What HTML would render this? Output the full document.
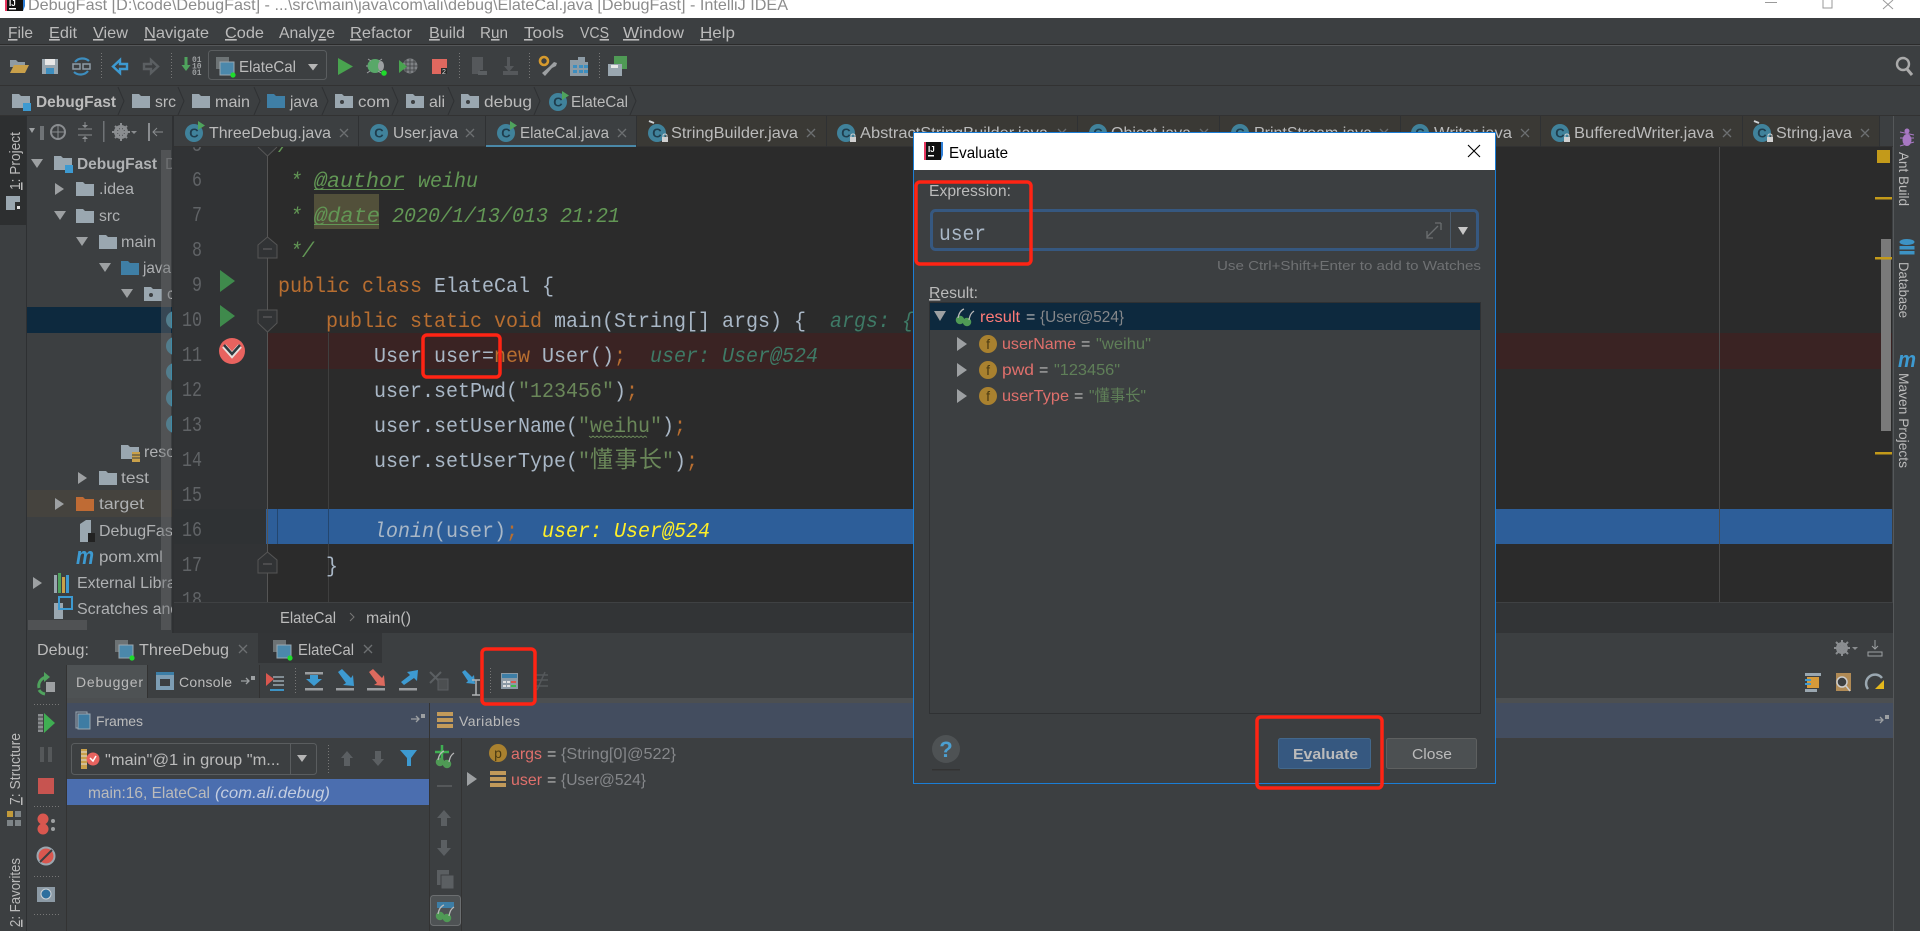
<!DOCTYPE html>
<html><head><meta charset="utf-8"><title>Evaluate</title>
<style>
html,body{margin:0;padding:0;background:#3c3f41;overflow:hidden;width:1920px;height:931px}
svg{display:block}
text{white-space:pre}
.s{font-family:"Liberation Sans","Noto Sans CJK SC",sans-serif;font-size:16px;fill:#bbbbbb}
.c{font-family:"Liberation Mono","Noto Sans CJK SC",monospace;font-size:21px;fill:#a9b7c6}
.n{font-family:"Liberation Mono",monospace;font-size:21px;fill:#606366}
.k{fill:#b86e30}.g{fill:#629755;font-style:italic}.str{fill:#6a8759}
.h{fill:#3e7a66;font-style:italic}
.y{fill:#ffef28;font-style:italic}
.t{fill:#afb1b3}
.r{fill:#e0706c}.v{fill:#85878a}.q{fill:#5f7f58}
.u{text-decoration:underline}
</style></head><body>
<svg width="1920" height="931" viewBox="0 0 1920 931" xmlns="http://www.w3.org/2000/svg">
<defs>
<path id="fld" d="M0 1h7l2 2h9v12H0z"/>
<g id="pkg"><path d="M0 1h7l2 2h9v12H0z" fill="#9aa7b0"/><circle cx="7" cy="9" r="2" fill="#3c3f41"/></g>
<g id="cls"><circle cx="9" cy="10" r="9" fill="#40829b"/><text x="9" y="14.500" text-anchor="middle" font-family="Liberation Sans" font-size="13" font-weight="bold" fill="#1f3d4d">C</text></g>
<path id="runov" d="M0 0l7 4.5-7 4.5z" fill="#4fa35d"/>
<g id="lock"><rect x="0" y="3" width="6" height="5" fill="#d0d0d0"/><path d="M1 3V1.5a2 1.5 0 0 1 4 0V3" fill="none" stroke="#d0d0d0"/></g>
<g id="runicon"><rect x="0" y="0" width="13" height="12" fill="#6d7375"/><rect x="4" y="5" width="14" height="13" fill="#4b88ab" stroke="#9aa7b0"/><circle cx="17" cy="18" r="2.6" fill="#1fdc2c"/></g>
<path id="ar" d="M0-6l9 6-9 6z" fill="#9da0a2"/>
<path id="ad" d="M-6 0h12l-6 9z" fill="#9da0a2"/>
<g id="pin"><path d="M0 5h8M5 2l3 3-3 3" stroke="#9da0a2" fill="none" stroke-width="1.3"/><rect x="10" y="0" width="4" height="4" fill="#9da0a2"/></g>
<g id="fcirc"><circle r="9" fill="#a9812f"/><text y="5" text-anchor="middle" font-family="Liberation Sans" font-size="14" fill="#4a3a12">f</text></g>
<g id="vars"><rect x="0" y="0" width="16" height="4" fill="#c29a5a"/><rect x="0" y="6" width="16" height="4" fill="#c29a5a"/><rect x="0" y="12" width="16" height="4" fill="#c29a5a"/></g>
<g id="glasses" fill="none" stroke="#b9b9b9" stroke-width="1.3"><circle cx="4" cy="13" r="3.6" fill="#4f9a55" stroke="#4f9a55"/><circle cx="11" cy="15" r="3.6" fill="#4f9a55" stroke="#4f9a55"/><path d="M2 11C3 6 5 3 8 2M13 13C14 8 15 6 18 4"/></g>
<clipPath id="cp"><rect x="27" y="147" width="145" height="483"/></clipPath>
<clipPath id="ce"><rect x="172" y="147" width="1720" height="455"/></clipPath>
<clipPath id="ct"><rect x="0" y="0" width="1920" height="18"/></clipPath>
</defs>

<!-- Title -->
<rect width="1920" height="18" fill="#fff"/>
<g clip-path="url(#ct)">
<rect x="7" y="-6" width="16" height="17" fill="#111"/><path d="M5-6h2v17H5z" fill="#e8375f"/><path d="M23-6h2v12l-2 5z" fill="#2e7fd8"/><path d="M9 8h7v1.5H9z" fill="#fff"/><text x="9" y="6" font-family="Liberation Sans" font-weight="bold" font-size="8" fill="#fff">IJ</text>
<text class="s" x="28" y="10" textLength="760" lengthAdjust="spacingAndGlyphs" style="fill:#8c8c8c">DebugFast [D:\code\DebugFast] - ...\src\main\java\com\ali\debug\ElateCal.java [DebugFast] - IntelliJ IDEA</text>
<path d="M1765 2.500h12M1823 0v8h9V0M1883 0l5 4.500 5-4.500M1888 4.500l-5 4.500M1888 4.500l5 4.500" stroke="#9a9a9a" fill="none"/>
</g>

<!-- Menu -->
<rect y="18" width="1920" height="26" fill="#3c3f41"/>
<rect y="44" width="1920" height="1" fill="#2b2b2b"/><rect y="45" width="1920" height="1" fill="#555759"/>
<g>
<text class="s" x="8" y="38" textLength="25" lengthAdjust="spacingAndGlyphs"><tspan class="u">F</tspan>ile</text>
<text class="s" x="49" y="38" textLength="28" lengthAdjust="spacingAndGlyphs"><tspan class="u">E</tspan>dit</text>
<text class="s" x="93" y="38" textLength="35" lengthAdjust="spacingAndGlyphs"><tspan class="u">V</tspan>iew</text>
<text class="s" x="144" y="38" textLength="65" lengthAdjust="spacingAndGlyphs"><tspan class="u">N</tspan>avigate</text>
<text class="s" x="225" y="38" textLength="39" lengthAdjust="spacingAndGlyphs"><tspan class="u">C</tspan>ode</text>
<text class="s" x="279" y="38" textLength="56" lengthAdjust="spacingAndGlyphs">Analy<tspan class="u">z</tspan>e</text>
<text class="s" x="350" y="38" textLength="62" lengthAdjust="spacingAndGlyphs"><tspan class="u">R</tspan>efactor</text>
<text class="s" x="429" y="38" textLength="36" lengthAdjust="spacingAndGlyphs"><tspan class="u">B</tspan>uild</text>
<text class="s" x="480" y="38" textLength="28" lengthAdjust="spacingAndGlyphs">R<tspan class="u">u</tspan>n</text>
<text class="s" x="524" y="38" textLength="40" lengthAdjust="spacingAndGlyphs"><tspan class="u">T</tspan>ools</text>
<text class="s" x="580" y="38" textLength="29" lengthAdjust="spacingAndGlyphs">VC<tspan class="u">S</tspan></text>
<text class="s" x="623" y="38" textLength="61" lengthAdjust="spacingAndGlyphs"><tspan class="u">W</tspan>indow</text>
<text class="s" x="700" y="38" textLength="35" lengthAdjust="spacingAndGlyphs"><tspan class="u">H</tspan>elp</text>
</g>

<!-- Toolbar -->
<rect y="85" width="1920" height="1" fill="#323232"/>
<path d="M10 60h6l2 2h7v5H10z" fill="#8f9ba3"/><path d="M14 65h15l-4 8H10z" fill="#c9a04a"/>
<path d="M42 59h16v15H42z" fill="#9aa7b0"/><rect x="45" y="59" width="10" height="6" fill="#e8e8e8"/><rect x="46" y="68" width="8" height="6" fill="#3d8ebf"/>
<g fill="none" stroke="#3d8ebf" stroke-width="2.200"><path d="M75 62a9 8 0 0 1 14-1M88 71a9 8 0 0 1-14 1"/></g><path d="M73 64h7v5h-7zM83 64h7v5h-7z" fill="none" stroke="#8d9ba5" stroke-width="1.500"/>
<path d="M120 60l-7 6.500 7 6.500v-4h7v-5h-7z" fill="none" stroke="#3d9ad1" stroke-width="2.400"/>
<path d="M151 60l7 6.500-7 6.500v-4h-7v-5h7z" fill="none" stroke="#5b5f62" stroke-width="2.400"/>
<path d="M184.500 57h3v8h3l-4.500 6-4.500-6h3z" fill="#4fa35d"/>
<g font-family="Liberation Mono" font-size="8" font-weight="bold" fill="#9da0a2"><text x="192" y="62">01</text><text x="192" y="68.500">10</text><text x="192" y="75">01</text></g>
<rect x="208.500" y="50.500" width="118" height="29" rx="3" fill="#3c3f41" stroke="#5a5d5f"/>
<use href="#runicon" x="216" y="57"/>
<text class="s" x="239" y="72" textLength="57" lengthAdjust="spacingAndGlyphs">ElateCal</text>
<path d="M308 64h10l-5 6.500z" fill="#b5b5b5"/>
<path d="M338 58l15 8.500-15 8.500z" fill="#49a34f"/>
<ellipse cx="375" cy="66" rx="7.500" ry="7" fill="#59a869"/><ellipse cx="381" cy="66" rx="3" ry="5" fill="#9da0a2"/><path d="M368 59l3 2M382 59l-3 2M366 66h2M367 73l3-2M381 73l-3-2" stroke="#9da0a2"/><circle cx="384" cy="73" r="2.800" fill="#1fdc2c"/>
<circle cx="410" cy="66" r="7.500" fill="#7f8285"/><path d="M403 62h14M402 66h16M403 70h14M406 59v14M410 59v14M414 59v14" stroke="#3c3f41" stroke-width=".8"/><path d="M399 60l8 6.500-8 6.500z" fill="#49a34f"/>
<path d="M432 59h15v11h-4v4h-11z" fill="#e0685f"/><rect x="441" y="68" width="6" height="6" fill="#2b2b2b"/><text x="442" y="74" font-family="Liberation Sans" font-size="7" fill="#ddd">2</text>
<path d="M472 57h11v13h-3v4h-8z" fill="#55585b"/><path d="M478 71h9v4h-9z" fill="#5b5f62"/>
<path d="M507 57h3v9h4l-5 6-5-6h3zM503 71h15v4h-15z" fill="#55585b"/>
<circle cx="544" cy="61" r="4" fill="none" stroke="#d69a2d" stroke-width="2.600"/><path d="M549 67l5-5 3 1-1 3-4 2-7 8-3-3z" fill="#9da0a2"/>
<path d="M570 60h8v-3h7v5h3v14h-18z" fill="#8d9ba5"/><path d="M573 65h4v3h-4zM579 65h4v3h-4zM573 70h4v3h-4zM579 70h4v3h-4zM584 65h4v3h-4zM584 70h4v3h-4z" fill="#3d8ebf"/>
<rect x="614" y="56" width="13" height="13" fill="#4f9a55"/><path d="M608 64h14v12h-14z" fill="#9aa7b0"/><rect x="611" y="65" width="7" height="3" fill="#e8e8e8"/>
<g stroke="#777" stroke-dasharray="1 2"><path d="M101.500 53v26M171.500 53v26M459.500 53v26M529.500 53v26M599.500 53v26"/></g>
<circle cx="1903" cy="64" r="6" fill="none" stroke="#aaa" stroke-width="2.400"/><path d="M1907 69l5 6" stroke="#aaa" stroke-width="3"/>

<!-- Navbar -->
<g fill="none" stroke="#2f3133"><path d="M118 87l6 14-6 14M178 87l6 14-6 14M254 87l6 14-6 14M322 87l6 14-6 14M392 87l6 14-6 14M448 87l6 14-6 14M534 87l6 14-6 14M630 87l6 14-6 14"/></g>
<use href="#fld" x="12" y="93" fill="#9aa7b0"/><rect x="23" y="103" width="8" height="8" fill="#3d9ad1"/>
<text class="s" x="36" y="107" textLength="80" lengthAdjust="spacingAndGlyphs" font-weight="bold">DebugFast</text>
<use href="#fld" x="132" y="93" fill="#9aa7b0"/><text class="s" x="155" y="107" textLength="21" lengthAdjust="spacingAndGlyphs">src</text>
<use href="#fld" x="192" y="93" fill="#9aa7b0"/><text class="s" x="215" y="107" textLength="35" lengthAdjust="spacingAndGlyphs">main</text>
<use href="#fld" x="267" y="93" fill="#3f7fa6"/><text class="s" x="290" y="107" textLength="28" lengthAdjust="spacingAndGlyphs">java</text>
<use href="#pkg" x="335" y="93"/><text class="s" x="358" y="107" textLength="32" lengthAdjust="spacingAndGlyphs">com</text>
<use href="#pkg" x="406" y="93"/><text class="s" x="429" y="107" textLength="16" lengthAdjust="spacingAndGlyphs">ali</text>
<use href="#pkg" x="461" y="93"/><text class="s" x="484" y="107" textLength="48" lengthAdjust="spacingAndGlyphs">debug</text>
<use href="#cls" x="549" y="92"/><use href="#runov" x="562" y="91"/>
<text class="s" x="571" y="107" textLength="57" lengthAdjust="spacingAndGlyphs">ElateCal</text>
<rect y="115" width="1920" height="1" fill="#323232"/>

<!-- Left bar -->
<rect x="0" y="116" width="26" height="109" fill="#2d2f30"/>
<rect x="26" y="116" width="1" height="815" fill="#2e3032"/>
<text class="s" transform="translate(20,190) rotate(-90)" textLength="58" lengthAdjust="spacingAndGlyphs" style="font-size:15px"><tspan class="u">1</tspan>: Project</text>
<path d="M6 196h14v6h-5v8H6z" fill="#9aa7b0"/><rect x="17" y="206" width="3" height="3" fill="#ddd"/>
<text class="s" transform="translate(20,805) rotate(-90)" textLength="72" lengthAdjust="spacingAndGlyphs" style="font-size:15px"><tspan class="u">7</tspan>: Structure</text>
<path d="M7 811h6v6H7z" fill="#c29a3a"/><path d="M15 811h6v6h-6zM7 820h6v6H7zM15 820h6v6h-6z" fill="#7e8487"/>
<text class="s" transform="translate(20,927) rotate(-90)" textLength="69" lengthAdjust="spacingAndGlyphs" style="font-size:15px"><tspan class="u">2</tspan>: Favorites</text>

<!-- Project panel -->
<rect x="27" y="116" width="145" height="514" fill="#3c3f41"/>
<path d="M29 128l6 0-3 5z" fill="#9da0a2"/><rect x="40" y="126" width="4" height="14" fill="#6f7376"/>
<circle cx="58" cy="132" r="7" fill="none" stroke="#8a8d90" stroke-width="2"/><path d="M58 124v16M50 132h16" stroke="#8a8d90"/>
<path d="M78 129h14M78 135h14M85 122v5M85 142v-5" stroke="#8a8d90"/><path d="M82 125h6l-3 3zM82 139h6l-3-3z" fill="#8a8d90"/>
<rect x="103" y="121" width="1.500" height="21" fill="#6f7376"/>
<circle cx="121" cy="132" r="5.500" fill="none" stroke="#8a8d90" stroke-width="3"/><path d="M121 123v18M112 132h18M115 126l12 12M127 126l-12 12" stroke="#8a8d90" stroke-width="2"/>
<path d="M131 131h6l-3 3z" fill="#8a8d90"/>
<path d="M149 123v18" stroke="#8a8d90" stroke-width="2"/><path d="M153 132h10M157 128l-4 4 4 4" stroke="#8a8d90" fill="none"/>
<rect x="172" y="116" width="2" height="517" fill="#2f3133"/>
<g clip-path="url(#cp)">
<rect x="27" y="307" width="145" height="26" fill="#0d293e"/>
<rect x="27" y="490" width="145" height="27" fill="#45433e"/>
<use href="#ad" x="37" y="159"/><use href="#fld" x="54" y="155" fill="#9aa7b0"/><rect x="65" y="165" width="8" height="8" fill="#3d9ad1"/>
<text class="s t" x="77" y="169" textLength="80" lengthAdjust="spacingAndGlyphs" font-weight="bold">DebugFast</text><text class="s" x="165" y="169" style="fill:#6f7173">D</text>
<use href="#ar" x="55" y="189"/><use href="#fld" x="76" y="181" fill="#9aa7b0"/><text class="s t" x="99" y="194" textLength="35" lengthAdjust="spacingAndGlyphs">.idea</text>
<use href="#ad" x="60" y="211"/><use href="#fld" x="76" y="208" fill="#9aa7b0"/><text class="s t" x="99" y="221" textLength="21" lengthAdjust="spacingAndGlyphs">src</text>
<use href="#ad" x="82" y="237"/><use href="#fld" x="99" y="234" fill="#9aa7b0"/><text class="s t" x="121" y="247" textLength="35" lengthAdjust="spacingAndGlyphs">main</text>
<use href="#ad" x="105" y="263"/><use href="#fld" x="121" y="260" fill="#3f7fa6"/><text class="s t" x="143" y="273" textLength="28" lengthAdjust="spacingAndGlyphs">java</text>
<use href="#ad" x="127" y="289"/><use href="#pkg" x="144" y="286"/><text class="s t" x="167" y="299">com</text>
<g fill="#3f8aa6"><circle cx="175" cy="320" r="9"/><circle cx="175" cy="346" r="9"/><circle cx="175" cy="372" r="9"/><circle cx="175" cy="398" r="9"/><circle cx="175" cy="424" r="9"/></g>
<use href="#fld" x="121" y="444" fill="#9aa7b0"/><path d="M132 452h8v10h-8z" fill="#c9a04a"/><path d="M132 455h8M132 458h8" stroke="#3c3f41"/>
<text class="s t" x="144" y="457">resources</text>
<use href="#ar" x="78" y="478"/><use href="#fld" x="99" y="470" fill="#9aa7b0"/><text class="s t" x="121" y="483" textLength="28" lengthAdjust="spacingAndGlyphs">test</text>
<use href="#ar" x="55" y="504"/><use href="#fld" x="76" y="496" fill="#bf6b34"/><text class="s t" x="99" y="509" textLength="45" lengthAdjust="spacingAndGlyphs">target</text>
<path d="M80 524l6-4h5v22H80z" fill="#9aa7b0"/><rect x="88" y="533" width="7" height="9" fill="#222"/>
<text class="s t" x="99" y="536">DebugFast.iml</text>
<text x="76" y="564" font-family="Liberation Sans" font-size="24" font-style="italic" font-weight="bold" fill="#3d9ad1" textLength="18" lengthAdjust="spacingAndGlyphs">m</text>
<text class="s t" x="99" y="562" textLength="64" lengthAdjust="spacingAndGlyphs">pom.xml</text>
<use href="#ar" x="33" y="583"/><path d="M54 575h3v18h-3z" fill="#9aa7b0"/><path d="M58 573h3v20h-3z" fill="#4fa35d"/><path d="M62 577h3v16h-3z" fill="#c9a04a"/><path d="M66 575h3v18h-3z" fill="#3d9ad1"/>
<text class="s t" x="77" y="588">External Libraries</text>
<path d="M54 603h9v16h-9z" fill="#9aa7b0"/><rect x="59" y="597" width="13" height="12" fill="none" stroke="#3d9ad1" stroke-width="2"/>
<text class="s t" x="77" y="614">Scratches and Consoles</text>
</g>
<rect x="161" y="150" width="10" height="480" fill="#6a6c6e" opacity=".45"/>
<rect x="28" y="620" width="59" height="10" fill="#505254"/>

<!-- Editor -->
<rect x="174" y="147" width="94" height="455" fill="#313335"/>
<rect x="268" y="147" width="1624" height="455" fill="#2b2b2b"/>
<g clip-path="url(#ce)">
<rect x="268" y="333" width="1624" height="36" fill="#3a2323"/>
<rect x="174" y="509" width="94" height="35" fill="#2f3234"/>
<rect x="266" y="509" width="1626" height="35" fill="#2d5e99"/>
<path d="M1719.500 147v455" stroke="#4a4a4a"/>
<path d="M328.500 333v269" stroke="#3f3f3f"/>
<path d="M277.500 509v35" stroke="#23466f"/><path d="M328.500 509v35" stroke="#23466f"/>
<path d="M267.500 147v455" stroke="#555"/>
<rect x="314" y="194" width="65" height="35" fill="#52503a"/>
<!-- fold marks -->
<path d="M258 147l9.500 9 9.500-9" fill="#313335" stroke="#555"/>
<path d="M258 245l9.500-8 9.500 8v13h-19z" fill="#313335" stroke="#555"/><path d="M263 249h9" stroke="#666"/>
<path d="M258 310h19v13l-9.500 9-9.500-9z" fill="#313335" stroke="#555"/><path d="M263 317h9" stroke="#666"/>
<path d="M258 560l9.500-8 9.500 8v13h-19z" fill="#313335" stroke="#555"/><path d="M263 564h9" stroke="#666"/>
<!-- gutter icons -->
<path d="M220 270l15 11-15 11z" fill="#3f8a4c"/><path d="M220 305l15 11-15 11z" fill="#3f8a4c"/>
<circle cx="232" cy="351" r="13" fill="#e8635f"/><path d="M224 346l8 9 8-9" stroke="#e8e0dc" stroke-width="5" fill="none"/><path d="M224 345l8 9 8-9" stroke="#2d3a3f" stroke-width="2.500" fill="none"/>
<!-- numbers -->
<g>
<text class="n" x="192" y="151" textLength="10" lengthAdjust="spacingAndGlyphs">5</text>
<text class="n" x="192" y="186" textLength="10" lengthAdjust="spacingAndGlyphs">6</text>
<text class="n" x="192" y="221" textLength="10" lengthAdjust="spacingAndGlyphs">7</text>
<text class="n" x="192" y="256" textLength="10" lengthAdjust="spacingAndGlyphs">8</text>
<text class="n" x="192" y="291" textLength="10" lengthAdjust="spacingAndGlyphs">9</text>
<text class="n" x="182" y="326" textLength="20" lengthAdjust="spacingAndGlyphs">10</text>
<text class="n" x="182" y="361" textLength="20" lengthAdjust="spacingAndGlyphs">11</text>
<text class="n" x="182" y="396" textLength="20" lengthAdjust="spacingAndGlyphs">12</text>
<text class="n" x="182" y="431" textLength="20" lengthAdjust="spacingAndGlyphs">13</text>
<text class="n" x="182" y="466" textLength="20" lengthAdjust="spacingAndGlyphs">14</text>
<text class="n" x="182" y="501" textLength="20" lengthAdjust="spacingAndGlyphs">15</text>
<text class="n" x="182" y="536" textLength="20" lengthAdjust="spacingAndGlyphs">16</text>
<text class="n" x="182" y="571" textLength="20" lengthAdjust="spacingAndGlyphs">17</text>
<text class="n" x="182" y="606" textLength="20" lengthAdjust="spacingAndGlyphs">18</text>
</g>
<!-- code -->
<text class="c g" x="278" y="152" textLength="36" lengthAdjust="spacingAndGlyphs">/**</text>
<text class="c g" x="290" y="187" textLength="12" lengthAdjust="spacingAndGlyphs">*</text>
<text class="c g" x="314" y="187" textLength="91" lengthAdjust="spacingAndGlyphs">@author</text><path d="M314 189.500h90" stroke="#629755"/>
<text class="c g" x="418" y="187" textLength="60" lengthAdjust="spacingAndGlyphs">weihu</text>
<text class="c g" x="290" y="222" textLength="12" lengthAdjust="spacingAndGlyphs">*</text>
<text class="c g" x="314" y="222" textLength="66" lengthAdjust="spacingAndGlyphs">@date</text><path d="M314 224.500h65" stroke="#629755"/>
<text class="c g" x="392" y="222" textLength="228" lengthAdjust="spacingAndGlyphs">2020/1/13/013 21:21</text>
<text class="c g" x="290" y="257" textLength="24" lengthAdjust="spacingAndGlyphs">*/</text>
<text class="c k" x="278" y="292" textLength="144" lengthAdjust="spacingAndGlyphs">public class</text>
<text class="c" x="434" y="292" textLength="96" lengthAdjust="spacingAndGlyphs">ElateCal</text>
<text class="c" x="542" y="292" textLength="12" lengthAdjust="spacingAndGlyphs">{</text>
<text class="c k" x="326" y="327" textLength="216" lengthAdjust="spacingAndGlyphs">public static void</text>
<text class="c" x="554" y="327" textLength="48" lengthAdjust="spacingAndGlyphs">main</text>
<text class="c" x="602" y="327" textLength="204" lengthAdjust="spacingAndGlyphs">(String[] args) {</text>
<text class="c h" x="830" y="327" textLength="252" lengthAdjust="spacingAndGlyphs">args: {String[0]@522}</text>
<text class="c" x="374" y="362" textLength="48" lengthAdjust="spacingAndGlyphs">User</text>
<text class="c" x="434" y="362" textLength="60" lengthAdjust="spacingAndGlyphs">user=</text>
<text class="c k" x="494" y="362" textLength="36" lengthAdjust="spacingAndGlyphs">new</text>
<text class="c" x="542" y="362" textLength="72" lengthAdjust="spacingAndGlyphs">User()</text>
<text class="c k" x="614" y="362" textLength="12" lengthAdjust="spacingAndGlyphs">;</text>
<text class="c h" x="650" y="362" textLength="168" lengthAdjust="spacingAndGlyphs">user: User@524</text>
<text class="c" x="374" y="397" textLength="144" lengthAdjust="spacingAndGlyphs">user.setPwd(</text>
<text class="c str" x="518" y="397" textLength="96" lengthAdjust="spacingAndGlyphs">"123456"</text>
<text class="c" x="614" y="397" textLength="12" lengthAdjust="spacingAndGlyphs">)</text><text class="c k" x="626" y="397" textLength="12" lengthAdjust="spacingAndGlyphs">;</text>
<text class="c" x="374" y="432" textLength="204" lengthAdjust="spacingAndGlyphs">user.setUserName(</text>
<text class="c str" x="578" y="432" textLength="84" lengthAdjust="spacingAndGlyphs">"weihu"</text>
<path d="M589 436l2 1.500 2-1.500 2 1.500 2-1.500 2 1.500 2-1.500 2 1.500 2-1.500 2 1.500 2-1.500 2 1.500 2-1.500 2 1.500 2-1.500 2 1.500 2-1.500 2 1.500 2-1.500 2 1.500 2-1.500 2 1.500 2-1.500 2 1.500 2-1.500 2 1.500 2-1.500 2 1.500 2-1.500 2 1.500" fill="none" stroke="#6a8759"/>
<text class="c" x="662" y="432" textLength="12" lengthAdjust="spacingAndGlyphs">)</text><text class="c k" x="674" y="432" textLength="12" lengthAdjust="spacingAndGlyphs">;</text>
<text class="c" x="374" y="467" textLength="204" lengthAdjust="spacingAndGlyphs">user.setUserType(</text>
<text class="c str" x="578" y="467" textLength="12" lengthAdjust="spacingAndGlyphs">"</text>
<text class="c str" x="590" y="467" textLength="72" style="font-size:23px">懂事长</text>
<text class="c str" x="662" y="467" textLength="12" lengthAdjust="spacingAndGlyphs">"</text>
<text class="c" x="674" y="467" textLength="12" lengthAdjust="spacingAndGlyphs">)</text><text class="c k" x="686" y="467" textLength="12" lengthAdjust="spacingAndGlyphs">;</text>
<text class="c" x="374" y="537" textLength="60" lengthAdjust="spacingAndGlyphs" font-style="italic">lonin</text>
<text class="c" x="434" y="537" textLength="72" lengthAdjust="spacingAndGlyphs">(user)</text>
<text class="c k" x="506" y="537" textLength="12" lengthAdjust="spacingAndGlyphs">;</text>
<text class="c y" x="542" y="537" textLength="168" lengthAdjust="spacingAndGlyphs">user: User@524</text>
<text class="c" x="326" y="572" textLength="12" lengthAdjust="spacingAndGlyphs">}</text>
</g>
<!-- scrollbar markers -->
<rect x="1881" y="239" width="10" height="192" fill="#7a7a7a"/>
<rect x="1877" y="150" width="13" height="13" fill="#c39a1a"/>
<rect x="1875" y="197" width="17" height="2.500" fill="#c39a1a"/>
<rect x="1875" y="257" width="17" height="2.500" fill="#c39a1a"/>
<rect x="1875" y="452" width="17" height="2.500" fill="#c39a1a"/>

<!-- Tabs -->
<rect x="174" y="116" width="1719" height="31" fill="#3c3f41"/>
<rect x="174" y="146" width="1719" height="1" fill="#323232"/>
<g fill="#3a3935">
<rect x="636" y="116" width="190" height="30"/><rect x="827" y="116" width="250" height="30"/><rect x="1078" y="116" width="141" height="30"/><rect x="1220" y="116" width="180" height="30"/><rect x="1401" y="116" width="139" height="30"/><rect x="1541" y="116" width="201" height="30"/><rect x="1743" y="116" width="136" height="30"/>
</g>
<rect x="486" y="116" width="150" height="31" fill="#3c3f41"/>
<rect x="486" y="145" width="150" height="2" fill="#4a88a8"/>
<g fill="#2f3133"><rect x="358" y="116" width="1" height="31"/><rect x="485" y="116" width="1" height="31"/><rect x="636" y="116" width="1" height="31"/><rect x="826" y="116" width="1" height="31"/><rect x="1077" y="116" width="1" height="31"/><rect x="1219" y="116" width="1" height="31"/><rect x="1400" y="116" width="1" height="31"/><rect x="1540" y="116" width="1" height="31"/><rect x="1742" y="116" width="1" height="31"/><rect x="1879" y="116" width="1" height="31"/></g>
<use href="#cls" x="185" y="123"/><use href="#runov" x="198" y="121"/>
<text class="s" x="209" y="138" textLength="122" lengthAdjust="spacingAndGlyphs">ThreeDebug.java</text>
<use href="#cls" x="370" y="123"/>
<text class="s" x="393" y="138" textLength="65" lengthAdjust="spacingAndGlyphs">User.java</text>
<use href="#cls" x="497" y="123"/><use href="#runov" x="510" y="121"/>
<text class="s" x="520" y="138" textLength="89" lengthAdjust="spacingAndGlyphs">ElateCal.java</text>
<use href="#cls" x="648" y="123"/><use href="#lock" x="662" y="134"/><path d="M649 121l5 2" stroke="#cfd3d6" stroke-width="2"/>
<text class="s" x="671" y="138" textLength="127" lengthAdjust="spacingAndGlyphs">StringBuilder.java</text>
<use href="#cls" x="837" y="123"/><use href="#lock" x="850" y="134"/>
<text class="s" x="860" y="138" textLength="188" lengthAdjust="spacingAndGlyphs">AbstractStringBuilder.java</text>
<use href="#cls" x="1089" y="123"/><use href="#lock" x="1102" y="134"/>
<text class="s" x="1111" y="138" textLength="80" lengthAdjust="spacingAndGlyphs">Object.java</text>
<use href="#cls" x="1231" y="123"/><use href="#lock" x="1244" y="134"/>
<text class="s" x="1254" y="138" textLength="118" lengthAdjust="spacingAndGlyphs">PrintStream.java</text>
<use href="#cls" x="1411" y="123"/><use href="#lock" x="1424" y="134"/>
<text class="s" x="1434" y="138" textLength="78" lengthAdjust="spacingAndGlyphs">Writer.java</text>
<use href="#cls" x="1551" y="123"/><use href="#lock" x="1564" y="134"/>
<text class="s" x="1574" y="138" textLength="140" lengthAdjust="spacingAndGlyphs">BufferedWriter.java</text>
<use href="#cls" x="1753" y="123"/><use href="#lock" x="1767" y="134"/><path d="M1754 121l5 2" stroke="#cfd3d6" stroke-width="2"/>
<text class="s" x="1776" y="138" textLength="76" lengthAdjust="spacingAndGlyphs">String.java</text>
<path d="M340 129l8 8M348 129l-8 8M466 129l8 8M474 129l-8 8M618 129l8 8M626 129l-8 8M807 129l8 8M815 129l-8 8M1058 129l8 8M1066 129l-8 8M1200 129l8 8M1208 129l-8 8M1380 129l8 8M1388 129l-8 8M1521 129l8 8M1529 129l-8 8M1723 129l8 8M1731 129l-8 8M1861 129l8 8M1869 129l-8 8" stroke="#6d7072" stroke-width="1.300"/>

<!-- Right bar -->
<rect x="1893" y="116" width="27" height="815" fill="#3c3f41"/>
<rect x="1893" y="116" width="1" height="815" fill="#55585a"/>
<ellipse cx="1907" cy="140" rx="4.500" ry="6" fill="#a878c4"/><circle cx="1907" cy="131" r="2.500" fill="#a878c4"/><path d="M1900 132l14 3M1900 138l14 0M1900 146l14-4" stroke="#a878c4"/>
<text class="s" transform="translate(1899,152) rotate(90)" textLength="54" lengthAdjust="spacingAndGlyphs" style="font-size:14px">Ant Build</text>
<g fill="#3d93c4"><ellipse cx="1907" cy="242" rx="7.500" ry="3"/><rect x="1899.500" y="246" width="15" height="3.500"/><rect x="1899.500" y="251" width="15" height="3.500"/></g>
<text class="s" transform="translate(1899,262) rotate(90)" textLength="56" lengthAdjust="spacingAndGlyphs" style="font-size:14px">Database</text>
<text x="1898" y="367" font-family="Liberation Sans" font-size="22" font-style="italic" font-weight="bold" fill="#3d9ad1" textLength="18" lengthAdjust="spacingAndGlyphs">m</text>
<text class="s" transform="translate(1899,373) rotate(90)" textLength="95" lengthAdjust="spacingAndGlyphs" style="font-size:14px">Maven Projects</text>

<!-- Breadcrumb -->
<rect x="174" y="602" width="1719" height="31" fill="#323436"/>
<rect x="174" y="602" width="1719" height="1" fill="#3f4143"/>
<text class="s" x="280" y="623" textLength="56" lengthAdjust="spacingAndGlyphs">ElateCal</text>
<path d="M350 613l4 4-4 4" fill="none" stroke="#777"/>
<text class="s" x="366" y="623" textLength="45" lengthAdjust="spacingAndGlyphs">main()</text>

<!-- Debug panel -->
<rect x="27" y="633" width="1866" height="298" fill="#3c3f41"/>
<text class="s" x="37" y="655" textLength="52" lengthAdjust="spacingAndGlyphs">Debug:</text>
<use href="#runicon" x="115" y="640"/>
<text class="s" x="139" y="655" textLength="90" lengthAdjust="spacingAndGlyphs">ThreeDebug</text>
<path d="M239 645l8 8M247 645l-8 8" stroke="#6d7072" stroke-width="1.300"/>
<rect x="258" y="633" width="124" height="30" fill="#333537"/>
<use href="#runicon" x="273" y="640"/>
<text class="s" x="298" y="655" textLength="56" lengthAdjust="spacingAndGlyphs">ElateCal</text>
<path d="M364 645l8 8M372 645l-8 8" stroke="#6d7072" stroke-width="1.300"/>
<!-- top right -->
<circle cx="1842" cy="648" r="4.500" fill="none" stroke="#8a8d90" stroke-width="3"/><path d="M1842 640v16M1834 648h16M1836 642l12 12M1848 642l-12 12" stroke="#8a8d90" stroke-width="2"/>
<path d="M1852 647h6l-3 3z" fill="#8a8d90"/>
<path d="M1875 640v9M1872 646l3 3 3-3" stroke="#9da0a2" fill="none"/><rect x="1868" y="652" width="14" height="4" fill="none" stroke="#9da0a2"/>
<rect x="1805" y="673" width="16" height="3" fill="#9aa7b0"/><rect x="1805" y="689" width="12" height="3" fill="#9aa7b0"/><rect x="1807" y="677" width="12" height="11" fill="#d69a3a"/><path d="M1805 680h6M1805 684h6" stroke="#3d9ad1" stroke-width="2"/>
<rect x="1836" y="673" width="15" height="18" fill="#b08a55"/><circle cx="1842" cy="682" r="5" fill="#3c3f41" stroke="#ccc" stroke-width="1.500"/><path d="M1846 686l4 5" stroke="#ccc" stroke-width="1.500"/>
<path d="M1868 689a8.500 8.500 0 0 1 14-11" fill="none" stroke="#9aa7b0" stroke-width="2.500"/><path d="M1884 680v9h-9z" fill="#e5b81c"/>

<!-- sub tabs -->
<rect x="67" y="665" width="80" height="33" fill="#4e5254"/>
<rect x="147" y="665" width="1" height="33" fill="#323232"/>
<rect x="259" y="665" width="1" height="33" fill="#323232"/>
<text class="s" x="76" y="687" textLength="67" lengthAdjust="spacing" style="font-size:14px">Debugger</text>
<rect x="156" y="672" width="18" height="18" fill="#7d9db3"/><rect x="156" y="672" width="18" height="3" fill="#3c7ea6"/><rect x="160" y="679" width="10" height="7" fill="#3c3f41"/>
<text class="s" x="179" y="687" textLength="53" lengthAdjust="spacing" style="font-size:14px">Console</text>
<use href="#pin" x="241" y="676"/>
<path d="M266 673l8 6-8 7z" fill="#d9574f"/><path d="M273 677h11M273 681h11M273 685h11" stroke="#9aa7b0" stroke-width="1.500"/><path d="M270 689h14v2h-14z" fill="#3d93c4"/>
<path d="M295.500 668v26M490.500 668v26M328.500 745v30" stroke="#777" stroke-dasharray="1 2"/>
<rect x="305" y="672" width="18" height="2.500" fill="#9a9da0"/><rect x="305" y="688" width="18" height="2.500" fill="#9a9da0"/><path d="M310 675h8v4h4l-8 7-8-7h4z" fill="#3d9ad1"/>
<path d="M338 672l4-3 9 9 2-3 1 11-11-1 3-2z" fill="#3d9ad1"/><rect x="336" y="688" width="18" height="2.500" fill="#9a9da0"/>
<path d="M369 672l4-3 9 9 2-3 1 11-11-1 3-2z" fill="#dd6a5e"/><rect x="367" y="688" width="18" height="2.500" fill="#9a9da0"/>
<path d="M404 685l-3-3 9-7-3-3 11-2-1 11-3-3z" fill="#3d9ad1"/><rect x="399" y="688" width="18" height="2.500" fill="#9a9da0"/>
<path d="M430 672l11 11M441 672l-11 11" stroke="#5b5f62" stroke-width="2"/><rect x="438" y="679" width="10" height="11" fill="#4c4f51" stroke="#5b5f62"/>
<path d="M462 672l3-2 7 7 2-2 1 9-9-1 2-2z" fill="#3d9ad1"/><path d="M472 680h8M472 695h8M476 680v15" stroke="#b0b3b5" stroke-width="1.500"/>
<rect x="501" y="673" width="17" height="16" fill="#8c9aa5"/><rect x="502" y="674" width="15" height="4" fill="#3d7ea6"/><path d="M503 681h3v2h-3zM503 685h3v2h-3zM507 681h3v2h-3zM507 685h3v2h-3z" fill="#e0e0e0"/><rect x="511" y="681" width="5" height="2" fill="#d9574f"/><rect x="511" y="685" width="5" height="2" fill="#3dbb4e"/>
<path d="M536 675h12M536 680h12M536 686h12M545 672l-8 18" stroke="#55585b" stroke-width="1.500"/>
<rect x="67" y="698" width="1826" height="5" fill="#4c4f51"/>
<rect x="67" y="703" width="1826" height="35" fill="#434d5f"/>
<rect x="67" y="738" width="1826" height="1" fill="#3f3f3f"/>
<path d="M76 712h11v16H76z" fill="none" stroke="#9aa7b0"/><rect x="78" y="714" width="12" height="15" fill="#3e7ca3" stroke="#9aa7b0"/>
<text class="s" x="96" y="726" textLength="47" lengthAdjust="spacing" style="font-size:14px">Frames</text>
<use href="#pin" x="411" y="714"/>
<rect x="429" y="703" width="1" height="228" fill="#333"/>
<use href="#vars" x="437" y="712"/>
<text class="s" x="459" y="726" textLength="61" lengthAdjust="spacing" style="font-size:14px">Variables</text>
<use href="#pin" x="1875" y="715"/>
<rect x="66" y="665" width="1" height="266" fill="#333"/>
<!-- left strip icons -->
<path d="M39 688a9 9 0 0 1 8-11" fill="none" stroke="#4fa35d" stroke-width="3"/><path d="M44 672l6 5-6 5z" fill="#4fa35d"/><rect x="46" y="682" width="9" height="10" fill="#9da0a2"/><path d="M39 690a9 9 0 0 0 6 4" fill="none" stroke="#4fa35d" stroke-width="3"/>
<path d="M38 714h5v18h-5z" fill="#8a8d90"/><path d="M38 717h5M38 721h5M38 725h5M38 729h5" stroke="#3c3f41"/><path d="M44 713l11 10-11 10z" fill="#3fae52"/>
<path d="M40 747h4v15h-4zM48 747h4v15h-4z" fill="#55585a"/>
<rect x="38" y="778" width="16" height="16" fill="#c75450"/>
<circle cx="43" cy="819" r="5.500" fill="#d9574f"/><circle cx="43" cy="829" r="5.500" fill="#d9574f"/><circle cx="53" cy="821" r="2" fill="#9da0a2"/><circle cx="53" cy="829" r="2" fill="#9da0a2"/>
<circle cx="46" cy="856" r="8.500" fill="#d9574f" stroke="#9aa7b0" stroke-width="2"/><path d="M40 862l12-12" stroke="#3c3f41" stroke-width="2"/>
<rect x="37" y="887" width="18" height="15" fill="#8c9aa5"/><circle cx="46" cy="894" r="5" fill="#2e6f9e" stroke="#cfd3d6"/>
<path d="M34 704.500h27M34 806.500h27M34 876.500h27M34 914.500h27" stroke="#777" stroke-dasharray="1 2"/>
<!-- frames -->
<rect x="71.500" y="743.500" width="245" height="31" rx="3" fill="#3c3f41" stroke="#5a5d5f"/>
<path d="M290.500 744v30" stroke="#5a5d5f"/>
<path d="M81 749h6v20h-6z" fill="#c9a04a"/><path d="M81 752h6M81 756h6M81 760h6M81 764h6" stroke="#ddd"/><circle cx="93" cy="759" r="6.500" fill="#e8635f"/><path d="M90 758l3 3 3-5" stroke="#fff" stroke-width="1.500" fill="none"/>
<text class="s" x="105" y="765" textLength="175" lengthAdjust="spacingAndGlyphs">"main"@1 in group "m...</text>
<path d="M297 755h10l-5 7z" fill="#b5b5b5"/>
<path d="M347 751l6 7h-3v8h-6v-8h-3z" fill="#5b5f62"/><path d="M378 766l6-7h-3v-8h-6v8h-3z" fill="#5b5f62"/>
<path d="M400 750h17l-6 8v8l-4 0v-8z" fill="#3d9ad1"/>
<rect x="67" y="779" width="362" height="26" fill="#4b6eaf"/>
<text class="s" x="88" y="798" textLength="122" lengthAdjust="spacingAndGlyphs">main:16, ElateCal</text>
<text class="s" x="215" y="798" textLength="115" lengthAdjust="spacingAndGlyphs" font-style="italic" style="fill:#c3cde0">(com.ali.debug)</text>
<!-- var strip -->
<rect x="461" y="738" width="1" height="193" fill="#333"/>
<path d="M442 745v18M435 752h14" stroke="#3fae52" stroke-width="2.500"/><use href="#glasses" x="436" y="749"/>
<rect x="437" y="785" width="15" height="2" fill="#55585a"/>
<path d="M444 810l7 8h-4v8h-6v-8h-4z" fill="#5b5f62"/><path d="M444 856l7-8h-4v-8h-6v8h-4z" fill="#5b5f62"/>
<rect x="437" y="870" width="12" height="15" fill="#5b5f62"/><rect x="441" y="875" width="13" height="14" fill="#5b5f62" stroke="#3c3f41"/>
<rect x="430.500" y="895.500" width="30" height="30" rx="3" fill="#4e5254" stroke="#6b6e70"/>
<rect x="437" y="902" width="17" height="6" fill="#3d7ea6"/><use href="#glasses" x="436" y="903"/>
<!-- vars -->
<circle cx="498" cy="753" r="9" fill="#a9812f"/><text x="498" y="758" text-anchor="middle" font-family="Liberation Sans" font-size="14" fill="#4a3a12">p</text>
<text class="s r" x="511" y="759" textLength="31" lengthAdjust="spacingAndGlyphs">args</text>
<text class="s" x="547" y="759">=</text>
<text class="s v" x="561" y="759" textLength="115" lengthAdjust="spacingAndGlyphs">{String[0]@522}</text>
<path d="M467 772l10 7-10 7z" fill="#9da0a2"/>
<use href="#vars" x="490" y="771"/>
<text class="s r" x="511" y="785" textLength="31" lengthAdjust="spacingAndGlyphs">user</text>
<text class="s" x="547" y="785">=</text>
<text class="s v" x="561" y="785" textLength="85" lengthAdjust="spacingAndGlyphs">{User@524}</text>

<!-- Dialog -->
<rect x="913.500" y="132.500" width="582" height="651" fill="#3c3f41" stroke="#1b7ed6"/>
<rect x="914" y="133" width="581" height="37" fill="#fff"/>
<rect x="926" y="142" width="15" height="18" fill="#111"/><path d="M924 142h2v18h-2z" fill="#e8375f"/><path d="M941 142h2v13l-2 5z" fill="#2e7fd8"/><path d="M928 155h6v1.500h-6z" fill="#fff"/><text x="928" y="152" font-family="Liberation Sans" font-weight="bold" font-size="8" fill="#fff">IJ</text>
<text class="s" x="949" y="158" textLength="59" lengthAdjust="spacingAndGlyphs" style="fill:#000">Evaluate</text>
<path d="M1468 145l12 12M1480 145l-12 12" stroke="#000" stroke-width="1.100"/>
<text class="s" x="929" y="196" textLength="82" lengthAdjust="spacingAndGlyphs">Expression:</text>
<rect x="931.500" y="210.500" width="546" height="39" rx="4" fill="#3c3f41" stroke="#365880" stroke-width="3"/>
<path d="M1450.500 212v36" stroke="#4a5a6a"/>
<text class="c" x="939" y="240" textLength="47" lengthAdjust="spacingAndGlyphs">user</text>
<path d="M1427 237l11-11M1427 231v7h6M1441 223h-6M1441 223v7" fill="none" stroke="#6b6e70" stroke-width="1.300"/>
<path d="M1458 227h10l-5 8z" fill="#c7c7c7"/>
<text class="s" x="1217" y="270" textLength="264" lengthAdjust="spacingAndGlyphs" style="font-size:13px;fill:#6f7173">Use Ctrl+Shift+Enter to add to Watches</text>
<text class="s" x="929" y="298" textLength="49" lengthAdjust="spacingAndGlyphs"><tspan class="u">R</tspan>esult:</text>
<rect x="929.500" y="302.500" width="551" height="411" fill="#3c3f41" stroke="#2f3133"/>
<rect x="930" y="303" width="550" height="27" fill="#0d293e"/>
<path d="M934 311h12l-6 10z" fill="#9da0a2"/>
<use href="#glasses" x="956" y="307"/>
<text class="s" x="980" y="322" textLength="40" lengthAdjust="spacingAndGlyphs" style="fill:#ff7b78">result</text>
<text class="s" x="1026" y="322">=</text>
<text class="s v" x="1040" y="322" textLength="84" lengthAdjust="spacingAndGlyphs">{User@524}</text>
<path d="M957 337l10 7-10 7zM957 363l10 7-10 7zM957 389l10 7-10 7z" fill="#9da0a2"/>
<use href="#fcirc" x="988" y="344"/><use href="#fcirc" x="988" y="370"/><use href="#fcirc" x="988" y="396"/>
<text class="s r" x="1002" y="349" textLength="74" lengthAdjust="spacingAndGlyphs">userName</text><text class="s" x="1081" y="349">=</text><text class="s q" x="1096" y="349" textLength="55" lengthAdjust="spacingAndGlyphs">"weihu"</text>
<text class="s r" x="1002" y="375" textLength="32" lengthAdjust="spacingAndGlyphs">pwd</text><text class="s" x="1039" y="375">=</text><text class="s q" x="1054" y="375" textLength="66" lengthAdjust="spacingAndGlyphs">"123456"</text>
<text class="s r" x="1002" y="401" textLength="67" lengthAdjust="spacingAndGlyphs">userType</text><text class="s" x="1074" y="401">=</text><text class="s q" x="1089" y="401" textLength="57" lengthAdjust="spacingAndGlyphs">"懂事长"</text>
<circle cx="946" cy="749" r="14" fill="#4e5254"/>
<text x="946" y="757" text-anchor="middle" font-family="Liberation Sans" font-size="22" font-weight="bold" fill="#4c9fd0">?</text>
<rect x="932" y="769" width="28" height="1.500" fill="#333"/>
<rect x="1278.500" y="738.500" width="92" height="30" rx="2" fill="#365880" stroke="#43688c"/>
<text class="s" x="1293" y="759" textLength="65" lengthAdjust="spacingAndGlyphs" font-weight="bold" style="font-size:15px;fill:#bbbbbb">E<tspan class="u">v</tspan>aluate</text>
<rect x="1386.500" y="738.500" width="90" height="30" rx="2" fill="#4c5052" stroke="#5e6060"/>
<text class="s" x="1412" y="759" textLength="40" lengthAdjust="spacingAndGlyphs" style="font-size:15px">Close</text>

<!-- Red annotation boxes -->
<g fill="none" stroke="#ff2414" stroke-width="3.500">
<rect x="916" y="182" width="115" height="82" rx="4"/>
<rect x="423" y="335" width="77" height="42" rx="4"/>
<rect x="482" y="649" width="53" height="55" rx="4"/>
<rect x="1257" y="717" width="125" height="71" rx="4"/>
</g>
</svg>
</body></html>
